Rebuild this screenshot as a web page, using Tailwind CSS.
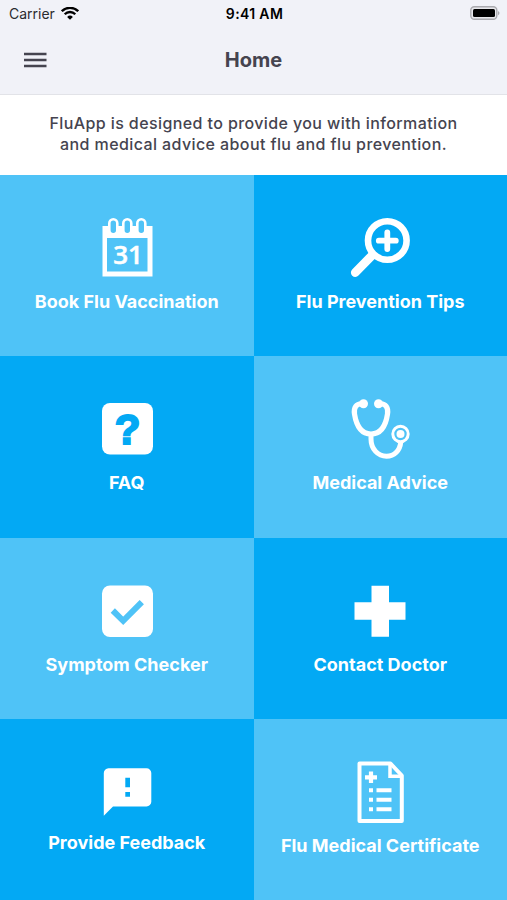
<!DOCTYPE html>
<html lang="en">
<head>
<meta charset="utf-8">
<meta name="viewport" content="width=device-width, initial-scale=1">
<title>FluApp</title>
<script src="https://cdn.jsdelivr.net/npm/@tailwindcss/browser@4"></script>
</head>
<body class="flex min-h-screen flex-col bg-white font-['Inter','Liberation_Sans',sans-serif] text-[#45444f]">
  <header class="border-b border-[#e2e3e8] bg-[#f1f2f8]">
    <div class="grid h-7 grid-cols-3 items-center pr-[7px] pl-[9px] text-sm text-black">
      <div class="flex items-center gap-1.5 text-[#2b2b2f]">
        <span>Carrier</span>
        <svg class="h-[14px] w-[18px]" viewBox="0 0 18 14" fill="none" stroke="#000" stroke-width="2.3" aria-label="Wi-Fi">
          <path d="M.8 4.200a11.6 11.6 0 0 1 16.4 0M3.7 7.200a7.5 7.5 0 0 1 10.6 0"/>
          <path d="M9 12.800 6.1 9.900a4.1 4.1 0 0 1 5.8 0z" fill="#000" stroke="none"/>
        </svg>
      </div>
      <time class="text-center text-sm font-semibold tracking-wide">9:41 AM</time>
      <svg class="h-4 w-[30px] justify-self-end" viewBox="0 1 30 16" aria-label="Battery">
        <rect x=".8" y="1.8" width="26" height="12.4" rx="3.5" fill="#e8e8ec" stroke="#aaaaaf" stroke-width="1.4"/>
        <rect x="3" y="4" width="22" height="8" rx="1.5" fill="#000"/>
        <path d="M28 6v4.200c2-.8 2-3.400 0-4.200z" fill="#aaaaaf"/>
      </svg>
    </div>
    <div class="grid h-[66px] grid-cols-3 items-center px-6 pb-0.5">
      <button type="button" aria-label="Open menu" class="w-6">
        <svg class="h-5 w-6" viewBox="0 0 24 20" stroke="#45444f" stroke-width="2.300"><path d="M0 4h22.500M0 10h22.500M0 16h22.500"/></svg>
      </button>
      <h1 class="text-center text-xl font-bold">Home</h1>
    </div>
  </header>

  <p class="px-10 pt-[18px] pb-5 text-center text-base leading-[21px] font-medium tracking-wide">FluApp is designed to provide you with information and medical advice about flu and flu prevention.</p>

  <nav class="grid flex-1 auto-rows-fr grid-cols-2 text-center text-lg leading-[25px] font-bold text-white">
    <a href="#book" class="flex flex-col items-center justify-center bg-[#4fc3f7]">
      <svg class="h-[72px] w-[75px]" viewBox="-1 8 75 72" aria-hidden="true">
        <path d="M12.500 17h50v50.500h-50z" fill="#fff"/>
        <path d="M17 29h40.500v33.500H17z" fill="#4fc3f7"/>
        <g fill="#4fc3f7" stroke="#fff" stroke-width="2.600"><rect x="19.300" y="10.300" width="8" height="15" rx="4"/><rect x="33.300" y="10.300" width="8" height="15" rx="4"/><rect x="47.300" y="10.300" width="8" height="15" rx="4"/></g>
        <text x="38" y="55" text-anchor="middle" font-family="Open Sans, sans-serif" font-size="26" font-weight="600" fill="#fff" stroke="#fff" stroke-width=".5">31</text>
      </svg>
      <span>Book Flu Vaccination</span>
    </a>
    <a href="#tips" class="flex flex-col items-center justify-center bg-[#03a9f4]">
      <svg class="h-[72px] w-[75px]" viewBox="0 8 75 72" fill="none" stroke="#fff" aria-hidden="true">
        <circle cx="44.300" cy="31.500" r="19.300" stroke-width="6.600"/>
        <path d="M44.300 23.500v16.500M35.800 31.700h17" stroke-width="5.800" stroke-linecap="round"/>
        <path d="M29 46.500 12.300 63.500" stroke-width="8.800" stroke-linecap="round"/>
      </svg>
      <span>Flu Prevention Tips</span>
    </a>
    <a href="#faq" class="flex flex-col items-center justify-center bg-[#03a9f4]">
      <svg class="h-[72px] w-[75px]" viewBox="-1 4 75 72" aria-hidden="true">
        <rect x="12" y="9" width="51" height="51.500" rx="8" fill="#fff"/>
        <text x="37.500" y="50" text-anchor="middle" font-family="Liberation Sans, sans-serif" font-size="42" font-weight="700" fill="#03a9f4" stroke="#03a9f4" stroke-width="2">?</text>
      </svg>
      <span>FAQ</span>
    </a>
    <a href="#advice" class="flex flex-col items-center justify-center bg-[#4fc3f7]">
      <svg class="h-[72px] w-[75px]" viewBox="0 7 75 72" fill="none" stroke="#fff" aria-hidden="true">
        <path d="M20 13C13 12 10.500 17 11.500 23c1.600 10 6 20 16.500 20s15-10 16.500-20c1-6-1.500-11-8.500-10" stroke-width="5.200" stroke-linecap="round"/>
        <g fill="#fff" stroke="none"><circle cx="20.500" cy="12.700" r="4.500"/><circle cx="35.500" cy="12.700" r="4.500"/><circle cx="57.500" cy="43" r="4"/></g>
        <path d="M28 43v5c0 10 7 17.300 15.500 17.300 8 0 13.500-6 14.300-14.300" stroke-width="5"/>
        <circle cx="57.500" cy="43" r="7.700" stroke-width="3"/>
      </svg>
      <span>Medical Advice</span>
    </a>
    <a href="#symptoms" class="flex flex-col items-center justify-center bg-[#4fc3f7]">
      <svg class="h-[72px] w-[75px]" viewBox="-1 5 75 72" aria-hidden="true">
        <rect x="12" y="10.500" width="51" height="51.500" rx="8" fill="#fff"/>
        <path d="m22.800 35.500 10.400 10.300 18.600-18.700" fill="none" stroke="#4fc3f7" stroke-width="6"/>
      </svg>
      <span>Symptom Checker</span>
    </a>
    <a href="#doctor" class="flex flex-col items-center justify-center bg-[#03a9f4]">
      <svg class="h-[72px] w-[75px]" viewBox="0 5 75 72" fill="#fff" aria-hidden="true">
        <path d="M28.500 10.800H46v16.400h16.500v17.600H46v16.900H28.500V44.800h-17V27.200h17z"/>
      </svg>
      <span>Contact Doctor</span>
    </a>
    <a href="#feedback" class="flex flex-col items-center justify-center bg-[#03a9f4]">
      <svg class="h-[67px] w-[75px]" viewBox="-1 8 75 67" aria-hidden="true">
        <path d="M18.500 13.300h38a4.800 4.800 0 0 1 4.800 4.800v28.600a4.800 4.800 0 0 1-4.800 4.800H23l-9.200 9.300V18.100a4.800 4.800 0 0 1 4.700-4.800z" fill="#fff"/>
        <path d="M35.300 22.800H40v9.400h-4.700zM35.300 37H40v4.800h-4.700z" fill="#03a9f4"/>
      </svg>
      <span>Provide Feedback</span>
    </a>
    <a href="#certificate" class="flex flex-col items-center justify-center bg-[#4fc3f7]">
      <svg class="h-[72px] w-[75px]" viewBox="0 6 75 72" fill="none" stroke="#fff" stroke-width="4" aria-hidden="true">
        <path d="M16.500 8.500h31l11.300 12V66H16.500z" stroke-linejoin="round"/>
        <path d="M47 9v12.200h11.500" stroke-width="3.500"/>
        <path d="M28 16.500v11.500M22 22.300h12" stroke-width="4.200"/>
        <path d="M26 35.300h4M26 44.800h4M26 54.300h4M33.500 35.300h15M33.500 44.800h15M33.500 54.300h15"/>
      </svg>
      <span>Flu Medical Certificate</span>
    </a>
  </nav>
</body>
</html>
